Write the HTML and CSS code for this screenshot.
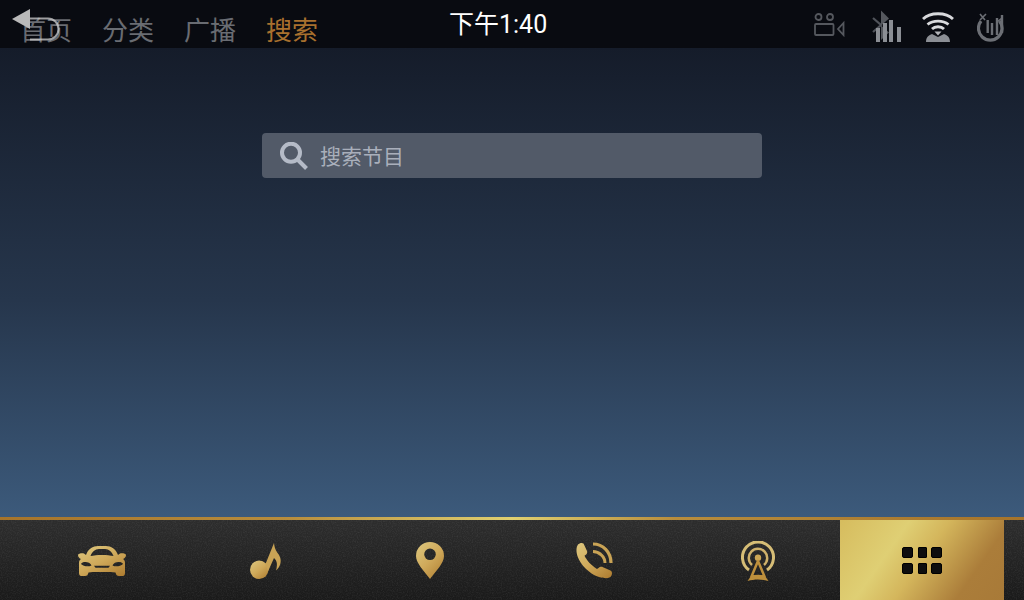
FILE: index.html
```html
<!DOCTYPE html>
<html lang="zh-CN">
<head>
<meta charset="utf-8">
<title>搜索</title>
<link rel="stylesheet" href="styles.css">
</head>
<body>
<svg class="defs" width="0" height="0" aria-hidden="true">
  <defs>
    <linearGradient id="gold" x1="0.1" y1="0" x2="0.9" y2="1">
      <stop offset="0" stop-color="#dcc57c"/>
      <stop offset="0.5" stop-color="#cfa95a"/>
      <stop offset="1" stop-color="#b07f33"/>
    </linearGradient>
    <filter id="grain" x="0" y="0" width="100%" height="100%">
      <feTurbulence type="fractalNoise" baseFrequency="0.8" numOctaves="2" seed="4"/>
      <feColorMatrix type="matrix" values="0 0 0 0 1  0 0 0 0 1  0 0 0 0 1  0.9 0 0 0 -0.36"/>
    </filter>
  </defs>
</svg>
<div class="screen">
  <header class="topbar">
    <nav class="tabs">
      <span class="tab">首页</span>
      <span class="tab">分类</span>
      <span class="tab">广播</span>
      <span class="tab tab-active">搜索</span>
    </nav>
    <div class="clock">下午1:40</div>
    <div class="status">
      <svg class="st-camera" width="32" height="24" viewBox="0 0 32 24" fill="none" stroke="#55585e" stroke-width="1.800">
        <circle cx="4.500" cy="4" r="3"/>
        <circle cx="16" cy="4" r="3"/>
        <rect x="1" y="11" width="18.500" height="11" rx="1"/>
        <path d="M29.500 10v12l-5.500-6z"/>
      </svg>
      <svg class="st-bt" width="30" height="32" viewBox="0 0 30 32">
        <path d="M1 8l8 7-8 7" fill="none" stroke="#50535a" stroke-width="2.200"/>
        <path d="M9 .5l8 8-8 7 8 7-8 7.500z" fill="#55585e"/>
        <path d="M4 18h4v14H4zM11 13h4v19h-4zM17 10h4v22h-4zM25 17h4v15h-4z" fill="#8b8e94"/>
      </svg>
      <svg class="st-wifi" width="32" height="31" viewBox="0 0 32 31" fill="none" stroke="#d8d9dc" stroke-width="2.800">
        <path d="M1 7C8 0 24 0 31 7"/>
        <path d="M5.500 12.500C11 8 21 8 26.500 12.500"/>
        <path d="M10 17C13 14 19 14 22 17"/>
        <path d="M4 30c0-5 3-7 6-8l6 3 6-3c3 1 6 3 6 8z" fill="#8b8e94" stroke="none"/>
        <path d="M12.500 19.500h7l-3.500 4z" fill="#b4b5b9" stroke="none"/>
      </svg>
      <svg class="st-power" width="27" height="31" viewBox="0 0 27 31" fill="none" stroke="#6c6f75">
        <path d="M4 8A11.800 11.800 0 1 0 22.500 8" stroke-width="3.200"/>
        <path d="M10.700 7v13M15 10v12M20 5v17M25 2v18" stroke-width="2.400"/>
        <path d="M3 1l5 6M9 1 3 7M20 9l5-4" stroke-width="1.600"/>
      </svg>
    </div>
  </header>

  <svg class="back" width="48" height="32" viewBox="0 0 48 32" aria-hidden="true">
    <path d="M18 9.500h18a10.500 10.500 0 0 1 0 21H18" fill="none" stroke="#d0d0d0" stroke-opacity=".75" stroke-width="2"/>
    <path d="M0 10 18 0v20z" fill="#b9b9b9"/>
  </svg>

  <main class="main">
    <div class="search">
      <svg class="search-icon" width="28" height="29" viewBox="0 0 28 29" fill="none" stroke="#b5bbc7">
        <circle cx="11" cy="10.700" r="9" stroke-width="4"/>
        <path d="M17 17 26.500 26.500" stroke-width="4"/>
      </svg>
      <span class="search-text">搜索节目</span>
    </div>
  </main>

  <footer class="dock">
    <svg class="grain" width="1024" height="80" aria-hidden="true"><rect width="1024" height="80" filter="url(#grain)"/></svg>
    <div class="dock-item">
      <svg class="ic-car" width="48" height="30" viewBox="0 0 48 30">
        <path fill="url(#gold)" fill-rule="evenodd" d="M20 0h8c5 0 10 3 12 9l2-1.500c2-.5 6 0 6 1.500 0 2-1.500 3.500-3 4 1.500 1 2 2 2 4v10c0 2-1 3-2 3h-4c-2 0-3-1-3.500-3.500L33 26H15l-4.500 .5C10 29 9 30 7 30H3c-1 0-2-1-2-3V17c0-2 .5-3 2-4-1.500-.5-3-2-3-4 0-1.500 4-2 6-1.500L8 9c2-6 7-9 12-9zM21 3c-4 0-7 3-8.500 7 6-1.500 17-1.500 23 0C34 6 31 3 27 3zM3 18c1.500-3 9-2.500 10.500 1.500-3 1.500-8 1-10.500-1.500zM45 18c-1.500-3-9-2.500-10.500 1.500 3 1.500 8 1 10.500-1.500zM16 19.700l1.500 2h13l1.500-2z"/>
      </svg>
    </div>
    <div class="dock-item">
      <svg class="ic-music" width="32" height="37" viewBox="0 0 32 37">
        <circle cx="9.200" cy="26.800" r="9.200" fill="url(#gold)"/>
        <path fill="#c9a355" d="M15.500 21 24 0c.5 6 3 9 5 12 3 5 2 11-3 15.500 1.500-5 1.500-9.500-2-12.500l-6 13.500z"/>
      </svg>
    </div>
    <div class="dock-item">
      <svg class="ic-pin" width="28" height="37" viewBox="0 0 28 37">
        <path fill="url(#gold)" fill-rule="evenodd" d="M14 0a14 14 0 0 1 14 14c0 7-8 15-14 23C8 29 0 21 0 14A14 14 0 0 1 14 0zM14 6.500a5.800 5.800 0 1 0 0 11.600 5.800 5.800 0 0 0 0-11.600z"/>
      </svg>
    </div>
    <div class="dock-item">
      <svg class="ic-phone" width="37" height="37" viewBox="0 0 37 37" fill="none">
        <path fill="url(#gold)" d="M2 2.500C3.500 1 6 .5 7.500 1.500L11 9c.5 1.500 0 3-1.500 4l-1 .8C11 19 16 24 21 27l1.500-1c1-1 3-1.500 4.500-.8l7.500 3.300c1.500.7 2 3 1 5-1.500 3-5.500 3.500-12.500 1.500C13 32 1 20 .5 9 .3 6 1 4 2 2.500z"/>
        <path stroke="#c9a355" stroke-width="3.200" d="M17 2c10 0 18 8 18 19"/>
        <path stroke="#c9a355" stroke-width="3" d="M17 9.500c6 0 12 5 12 11.500"/>
      </svg>
    </div>
    <div class="dock-item">
      <svg class="ic-radio" width="34" height="41" viewBox="0 0 34 41" fill="none">
        <path stroke="#d6bd76" stroke-width="3" d="M8 29a15.500 15.500 0 1 1 18 0"/>
        <path stroke="#cfb16a" stroke-width="2.500" d="M11 24a9.200 9.200 0 1 1 12 0"/>
        <circle cx="17" cy="16.700" r="3.200" fill="#cca655"/>
        <path stroke="#bd8f3c" stroke-width="2.500" stroke-linejoin="round" d="M17 20 10.500 35.500C15 34.800 19 34.800 23.500 35.500z"/>
        <path fill="#bd8f3c" d="M6.500 40 10 35h14l3.500 5C20 38 14 38 6.500 40z"/>
      </svg>
    </div>
    <div class="dock-item dock-item-active">
      <div class="apps">
        <i class="app"></i><i class="app app-mid"></i><i class="app"></i>
        <i class="app"></i><i class="app app-mid"></i><i class="app"></i>
      </div>
    </div>
  </footer>
</div>
</body>
</html>
```
FILE: styles.css
```css
* { box-sizing: border-box; }
html, body { margin: 0; padding: 0; height: 100%; overflow: hidden; }
body { font-family: "Noto Sans CJK SC", "Noto Sans", sans-serif; background: #000; }
.defs { position: absolute; }

.screen {
  position: relative;
  width: 1024px;
  height: 600px;
  display: flex;
  flex-direction: column;
  background: linear-gradient(180deg, #151c2a 8%, #26364c 50%, #3c5a7b 86%);
}

.topbar {
  position: relative;
  height: 48px;
  flex: none;
  display: flex;
  align-items: center;
  justify-content: space-between;
  padding: 0 20px 0 20px;
  background: #090b11;
}
.tabs { display: flex; gap: 30px; padding-top: 10px; }
.tab { font-size: 26px; line-height: 34px; color: #696c72; }
.tab-active { color: #a8702e; }
.clock {
  position: absolute;
  left: 449px;
  top: 7px;
  font-size: 25px;
  line-height: 36px;
  color: #fff;
  font-family: "Roboto", "Noto Sans CJK SC", sans-serif;
}
.status { display: flex; align-items: flex-start; height: 48px; }
.st-camera { margin-top: 13px; }
.st-bt { margin: 10px 0 0 26px; }
.st-wifi { margin: 12px 0 0 20px; }
.st-power { margin: 13px 0 0 23px; }

.back { position: absolute; left: 12px; top: 9px; }

.main { flex: 1; display: flex; justify-content: center; align-items: flex-start; padding-top: 85px; }
.search {
  width: 500px;
  height: 45px;
  display: flex;
  align-items: center;
  gap: 12px;
  padding-left: 18px;
  background: #525a68;
  border-radius: 4px;
}
.search-icon { flex: none; margin-top: 1px; }
.search-text { font-size: 21px; line-height: 30px; color: #a9afbb; margin-top: -2px; }

.dock {
  position: relative;
  height: 83px;
  flex: none;
  display: flex;
  padding: 3px 20px 0;
  background:
    linear-gradient(90deg, #a6742a 0, #b88d3c 28%, #e0d070 50%, #b88d3c 66%, #a6742a 100%) top / 100% 3px no-repeat,
    linear-gradient(180deg, #2e2e2e 0, #1a1a1a 100%);
}
.grain { position: absolute; left: 0; top: 3px; opacity: .16; }
.dock-item {
  position: relative;
  width: 164px;
  display: flex;
  align-items: center;
  justify-content: center;
}
.dock-item-active {
  background: linear-gradient(125deg, #d6bc5e 0, #dfcf74 32%, #d4b65c 50%, #ab7d3a 78%, #a87a38 100%);
}
.ic-car { margin-top: 1px; }
.ic-music { margin-top: 2px; }
.ic-pin { margin-top: 1px; }
.ic-phone { margin-top: 1px; margin-left: 1px; }
.ic-radio { margin-top: 2px; }
.apps {
  display: grid;
  grid-template-columns: 11px 9px 11px;
  row-gap: 5px;
  width: 40px;
  justify-content: space-between;
  margin-top: 1px;
}
.app { height: 11px; background: #0e0e0e; border: 1px solid #000; border-radius: 2px; }
.app-mid { border-radius: 1px; }
```
